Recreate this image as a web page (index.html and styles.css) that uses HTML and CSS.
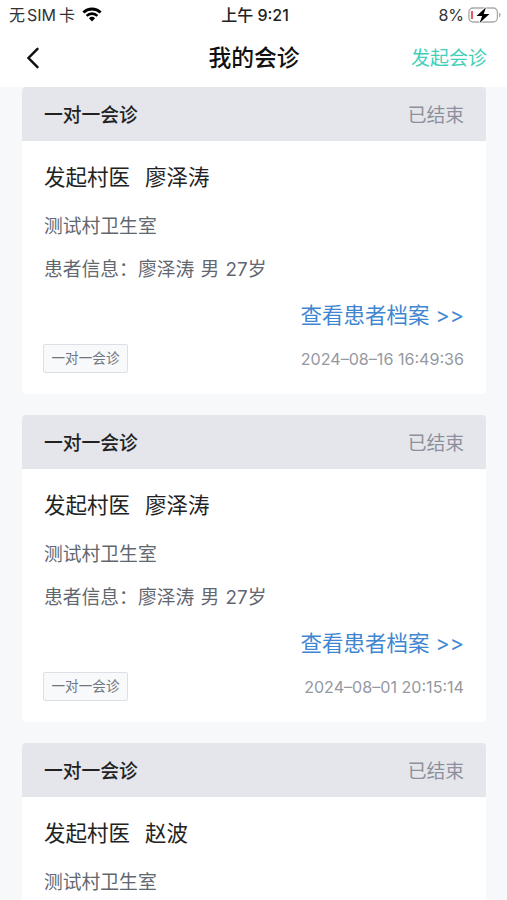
FILE: index.html
```
<!DOCTYPE html>
<html lang="zh-CN">
<head>
<meta charset="utf-8">
<title>我的会诊</title>
<link rel="stylesheet" href="styles.css">
</head>
<body>
<header class="top">
  <div class="status">
    <div class="carrier"><span class="sim">无<span class="latin">SIM</span>卡</span>
      <svg class="wifi" width="20" height="15" viewBox="0 0 20 15"><path d="M10 14.5 6.9 11.2a4.5 4.5 0 0 1 6.2 0zM5.5 9.8 3.7 7.9a9 9 0 0 1 12.6 0l-1.8 1.9a6.5 6.5 0 0 0-9 0zM2.3 6.5.4 4.5a13.7 13.7 0 0 1 19.2 0l-1.9 2a11.1 11.1 0 0 0-15.4 0z"/></svg>
    </div>
    <div class="clock">上午 9:21</div>
    <div class="power"><span class="pct">8%</span>
      <svg class="battery" width="33" height="18" viewBox="0 0 33 18"><rect x=".9" y="2" width="28.5" height="14" rx="4.2" fill="none" stroke="#aaa" stroke-width="1.3"/><path d="M4 5v8" stroke="#d9606c" stroke-width="2.2"/><path d="M31 6.5c2 .8 2 4 0 4.8z" fill="#aaa"/><path d="M18 1.2 8.5 10h5.6L11.6 17 21.5 8h-5.8z" stroke="#fff" stroke-width="1.6" paint-order="stroke"/></svg>
    </div>
  </div>
  <nav class="nav">
    <svg class="back" width="14" height="22" viewBox="0 0 14 22"><path d="m11.5 1.8-9 9.2 9 9.2" fill="none" stroke="#111" stroke-width="2.5" stroke-linecap="round"/></svg>
    <h1 class="title">我的会诊</h1>
    <a class="start">发起会诊</a>
  </nav>
</header>
<main class="list">
  <article class="card">
    <div class="head"><b class="kind">一对一会诊</b><span class="state">已结束</span></div>
    <div class="body">
      <h2 class="doctor"><span>发起村医</span><span>廖泽涛</span></h2>
      <p class="line">测试村卫生室</p>
      <p class="line">患者信息：廖泽涛 男 27岁</p>
      <a class="link">查看患者档案 &gt;&gt;</a>
      <div class="foot"><span class="tag">一对一会诊</span><time class="time">2024–08–16 16:49:36</time></div>
    </div>
  </article>
  <article class="card">
    <div class="head"><b class="kind">一对一会诊</b><span class="state">已结束</span></div>
    <div class="body">
      <h2 class="doctor"><span>发起村医</span><span>廖泽涛</span></h2>
      <p class="line">测试村卫生室</p>
      <p class="line">患者信息：廖泽涛 男 27岁</p>
      <a class="link">查看患者档案 &gt;&gt;</a>
      <div class="foot"><span class="tag">一对一会诊</span><time class="time">2024–08–01 20:15:14</time></div>
    </div>
  </article>
  <article class="card card-last">
    <div class="head"><b class="kind">一对一会诊</b><span class="state">已结束</span></div>
    <div class="body">
      <h2 class="doctor"><span>发起村医</span><span>赵波</span></h2>
      <p class="line">测试村卫生室</p>
    </div>
  </article>
</main>
</body>
</html>
```
FILE: styles.css
```
* { box-sizing: border-box; margin: 0; padding: 0; }
body {
  height: 900px;
  overflow: hidden;
  background: #f7f8fa;
  color: #222;
  font-family: Inter, "Noto Sans CJK SC", sans-serif;
}
.top { height: 87px; background: #fff; }
.status {
  height: 29px;
  padding: 0 6px 0 9px;
  display: grid;
  grid-template-columns: 1fr auto 1fr;
  align-items: center;
  font-size: 16px;
  line-height: 28px;
}
.carrier, .power { display: flex; align-items: center; gap: 7px; }
.carrier { color: #333; }
.latin { margin: 0 3px 0 2px; }
.wifi { fill: #000; }
.power { justify-content: flex-end; gap: 4px; color: #333; }
.clock { font-weight: 500; }
.nav {
  height: 58px;
  padding: 0 20px 0 26px;
  display: grid;
  grid-template-columns: 1fr auto 1fr;
  align-items: center;
}
.title { margin-right: 5px; font-size: 22.8px; line-height: 32px; font-weight: 500; color: #111; }
.start { justify-self: end; padding-top: 1px; font-size: 19px; line-height: 28px; color: #3fd0b9; }
.list { padding: 0 21px 0 22px; display: grid; gap: 21px; }
.card { height: 307px; background: #fff; border-radius: 4px; overflow: hidden; }
.card-last { height: 157px; border-radius: 4px 4px 0 0; }
.head {
  height: 54px;
  padding: 0 22px 2px;
  background: #e4e6eb;
  display: flex;
  align-items: center;
  justify-content: space-between;
  font-size: 18.8px;
}
.kind { font-weight: 500; }
.state { color: #8d919d; }
.body { padding: 20px 22px 0; display: flex; flex-direction: column; }
.doctor { display: flex; gap: 15px; font-size: 21.5px; line-height: 32px; font-weight: 400; }
.line { margin-top: 20px; font-size: 18.8px; line-height: 28px; color: #62676f; word-spacing: 1px; }
.line + .line { margin-top: 15px; }
.link { align-self: flex-end; margin-top: 15px; font-size: 21.5px; line-height: 32px; color: #3f86d2; }
.foot { margin-top: 13px; display: flex; align-items: center; justify-content: space-between; }
.tag {
  width: 85px;
  height: 29px;
  margin-left: -1px;
  border: 1px solid #dcdfe5;
  border-radius: 2px;
  background: #f7f9fb;
  color: #70757e;
  font-size: 13.6px;
  line-height: 27px;
  text-align: center;
}
.time { font-size: 16.1px; color: #96999f; }
```
